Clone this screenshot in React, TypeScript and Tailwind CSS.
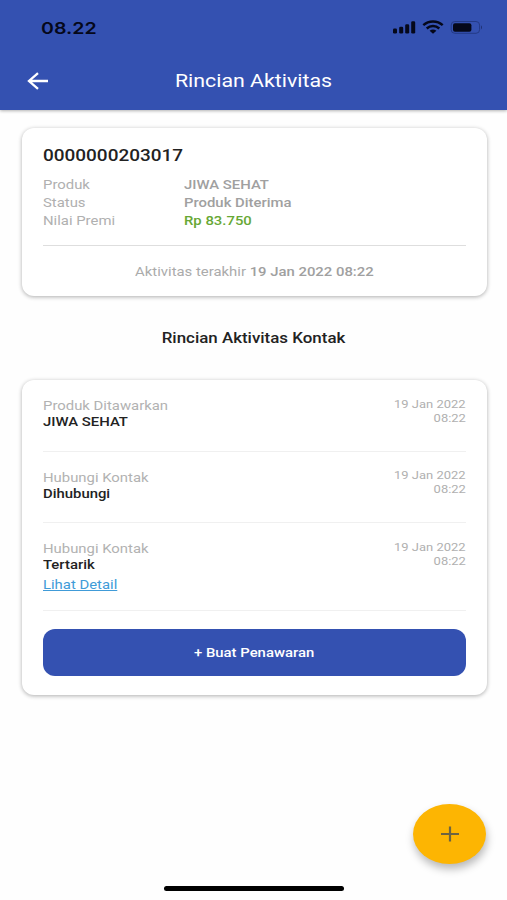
import React from "react";
import clsx from "clsx";

type Activity = { label: string; value: string; date: string; time: string; link?: string };

const summary = [
  { label: "Produk", value: "JIWA SEHAT", color: "text-[#a0a0a0]" },
  { label: "Status", value: "Produk Diterima", color: "text-[#a0a0a0]" },
  { label: "Nilai Premi", value: "Rp 83.750", color: "text-[#67a835]" },
];

const activities: Activity[] = [
  { label: "Produk Ditawarkan", value: "JIWA SEHAT", date: "19 Jan 2022", time: "08:22" },
  { label: "Hubungi Kontak", value: "Dihubungi", date: "19 Jan 2022", time: "08:22" },
  { label: "Hubungi Kontak", value: "Tertarik", date: "19 Jan 2022", time: "08:22", link: "Lihat Detail" },
];

// Slightly extended type, used for every label on the screen
const Wide = ({ children, className }: { children: React.ReactNode; className?: string }) => (
  <span className={clsx("inline-block whitespace-nowrap scale-x-[1.2]", className)}>{children}</span>
);

const StatusIcons = () => (
  <svg width="92" height="16" viewBox="0 0 92 16" fill="none">
    {/* Signal */}
    <g fill="#05081a">
      <rect x="1" y="8.5" width="4" height="5" rx="1.3" />
      <rect x="7.2" y="6.8" width="4" height="6.7" rx="1.3" />
      <rect x="13.2" y="4.2" width="4" height="9.3" rx="1.3" />
      <rect x="19.2" y="1.2" width="4" height="12.3" rx="1.3" />
    </g>
    {/* Wifi */}
    <g stroke="#05081a" strokeWidth="2.4">
      <path d="M31.3 5.2C36.8 0.2 45.2 0.2 50.7 5.2" />
      <path d="M34.7 8.5C38.3 5.2 43.7 5.2 47.3 8.5" />
    </g>
    <path d="M37.6 10.8Q41 8.2 44.4 10.8L41 13.7Z" fill="#05081a" />
    {/* Battery */}
    <rect x="59.2" y="1.5" width="28.4" height="11.8" rx="3.6" stroke="#243a86" />
    <rect x="61" y="3.2" width="18.4" height="8.6" rx="2" fill="#05081a" />
    <path d="M89 5.2Q91 7.3 89 9.4Z" fill="#1f3273" />
  </svg>
);

const Header = () => (
  <header className="h-[110px] bg-[#3451b1] shadow-[0_1px_3px_rgba(0,0,0,0.3)]">
    <div className="flex h-[54px] items-center justify-between pt-px pr-[23px] pl-[41px]">
      <Wide className="origin-left pt-px font-['Inter'] text-[16.3px] font-semibold text-[#05081a]">08.22</Wide>
      <StatusIcons />
    </div>
    <div className="grid h-[54px] grid-cols-[56px_1fr_56px] items-center">
      <button className="pl-[27px]" aria-label="Kembali">
        <svg width="22" height="18" viewBox="0 0 22 18" fill="none" stroke="white" strokeWidth="2.3">
          <path d="M21 9H2M11 1.2L2 9L11 16.8" />
        </svg>
      </button>
      <h1 className="text-center text-[17.8px] text-white">
        <Wide>Rincian Aktivitas</Wide>
      </h1>
    </div>
  </header>
);

const Card = ({ children, className }: { children: React.ReactNode; className?: string }) => (
  <section
    className={clsx(
      "ml-[21.5px] w-[465px] rounded-[12px] bg-white px-[21px] shadow-[0_1px_4px_rgba(0,0,0,0.32)]",
      className
    )}
  >
    {children}
  </section>
);

const ActivityRow = ({ item }: { item: Activity }) => (
  <div
    className={clsx(
      "flex justify-between border-b border-[#f0f0f0] text-[12.4px] leading-4",
      item.link ? "h-[88px]" : "h-[71.5px]"
    )}
  >
    <div className="flex flex-col items-start pt-[18px]">
      <Wide className="origin-left text-[#b2b2b2]">{item.label}</Wide>
      <Wide className="origin-left font-medium text-[#222]">{item.value}</Wide>
      {item.link && (
        <a href="#" className="mt-1 text-[#409bd8]">
          <Wide className="origin-left underline">{item.link}</Wide>
        </a>
      )}
    </div>
    <div className="flex flex-col items-end pt-[17.9px] text-[10.8px] leading-[14px] text-[#b0b0b0]">
      <Wide className="origin-right">{item.date}</Wide>
      <Wide className="origin-right">{item.time}</Wide>
    </div>
  </div>
);

const App = () => {
  return (
    <div className="relative h-[900px] w-[507px] overflow-hidden bg-[#fefefe] font-['Roboto',sans-serif]">
      <Header />

      <Card className="mt-[18px] h-[168px] pt-4">
        <h2 className="text-[15.8px] leading-6 font-medium text-[#222]">
          <Wide className="origin-left">0000000203017</Wide>
        </h2>
        <div className="mt-2 text-[12.4px] leading-[18px]">
          {summary.map((row) => (
            <div key={row.label} className="grid h-[18px] grid-cols-[141px_1fr]">
              <div className="text-[#b0b0b0]">
                <Wide className="origin-left">{row.label}</Wide>
              </div>
              <div className={clsx("font-medium", row.color)}>
                <Wide className="origin-left">{row.value}</Wide>
              </div>
            </div>
          ))}
        </div>
        <p className="mt-[15px] border-t border-[#dedede] pt-[17px] text-center text-[12.4px] leading-[18px] text-[#ababab]">
          <Wide>
            Aktivitas terakhir <span className="font-medium text-[#a0a0a0]">19 Jan 2022 08:22</span>
          </Wide>
        </p>
      </Card>

      <h3 className="mt-8 text-center text-[14.1px] leading-5 font-medium text-[#222]">
        <Wide>Rincian Aktivitas Kontak</Wide>
      </h3>

      <Card className="mt-8 h-[315px]">
        {activities.map((item, index) => (
          <ActivityRow key={index} item={item} />
        ))}
        <button className="mt-[18.4px] h-[47px] w-full rounded-[12px] bg-[#3451b1] text-[12.4px] font-medium text-white">
          <Wide>+ Buat Penawaran</Wide>
        </button>
      </Card>

      {/* Floating add button */}
      <button
        aria-label="Tambah"
        className="absolute top-[804px] left-[413px] flex h-[60px] w-[73px] items-center justify-center rounded-[50%] bg-[#fdb502] shadow-[1px_5px_8px_rgba(0,0,0,0.28)]"
      >
        <svg width="18" height="16" viewBox="0 0 18 16" stroke="#6d6442" strokeWidth="2.2">
          <path d="M0 8H18M9 0.5V15.5" />
        </svg>
      </button>

      {/* Home indicator */}
      <div className="absolute bottom-[9px] left-[164px] h-[5px] w-[180px] rounded-full bg-black" />
    </div>
  );
};

export default App;
